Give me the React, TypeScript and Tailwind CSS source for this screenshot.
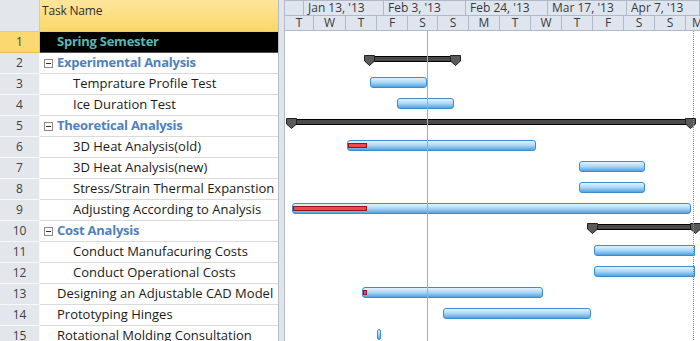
import React from "react";

type Row = { id: number; name: string; kind: "top" | "summary" | "task" | "plain" };

const rows: Row[] = [
  { id: 1, name: "Spring Semester", kind: "top" },
  { id: 2, name: "Experimental Analysis", kind: "summary" },
  { id: 3, name: "Temprature Profile Test", kind: "task" },
  { id: 4, name: "Ice Duration Test", kind: "task" },
  { id: 5, name: "Theoretical Analysis", kind: "summary" },
  { id: 6, name: "3D Heat Analysis(old)", kind: "task" },
  { id: 7, name: "3D Heat Analysis(new)", kind: "task" },
  { id: 8, name: "Stress/Strain Thermal Expanstion", kind: "task" },
  { id: 9, name: "Adjusting According to Analysis", kind: "task" },
  { id: 10, name: "Cost Analysis", kind: "summary" },
  { id: 11, name: "Conduct Manufacuring Costs", kind: "task" },
  { id: 12, name: "Conduct Operational Costs", kind: "task" },
  { id: 13, name: "Designing an Adjustable CAD Model", kind: "plain" },
  { id: 14, name: "Prototyping Hinges", kind: "plain" },
  { id: 15, name: "Rotational Molding Consultation", kind: "plain" },
];

// chart x positions are page x minus 285
type Bar = { type: "task" | "summary"; from: number; to: number; progress?: number; open?: boolean };
const bars: (Bar | null)[] = [
  null,
  { type: "summary", from: 365, to: 460 },
  { type: "task", from: 370, to: 427 },
  { type: "task", from: 397, to: 454 },
  { type: "summary", from: 287, to: 695 },
  { type: "task", from: 347, to: 536, progress: 366 },
  { type: "task", from: 579, to: 645 },
  { type: "task", from: 579, to: 645 },
  { type: "task", from: 292, to: 691, progress: 366 },
  { type: "summary", from: 588, to: 700 },
  { type: "task", from: 594, to: 695, open: true },
  { type: "task", from: 594, to: 695, open: true },
  { type: "task", from: 362, to: 543, progress: 366 },
  { type: "task", from: 443, to: 591 },
  { type: "task", from: 377, to: 381 },
];

const topTier = [
  { w: 19, label: "" },
  { w: 80, label: "Jan 13, '13" },
  { w: 82, label: "Feb 3, '13" },
  { w: 82, label: "Feb 24, '13" },
  { w: 79, label: "Mar 17, '13" },
  { w: 73, label: "Apr 7, '13" },
];

const bottomTier = [
  { w: 29, l: "T" },
  { w: 32, l: "W" },
  { w: 31, l: "T" },
  { w: 31, l: "F" },
  { w: 30, l: "S" },
  { w: 31, l: "S" },
  { w: 31, l: "M" },
  { w: 31, l: "T" },
  { w: 31, l: "W" },
  { w: 31, l: "T" },
  { w: 31, l: "F" },
  { w: 31, l: "S" },
  { w: 31, l: "S" },
  { w: 24, l: "M" },
];

function Cap({ x }: { x: number }) {
  return (
    <svg className="absolute top-[3px]" style={{ left: x }} width="11" height="11" viewBox="0 0 11 11">
      <path d="M0.5 0.5 H10.5 V6 L5.5 10.5 L0.5 6 Z" fill="#5a5a5a" stroke="#222" strokeWidth="1" />
    </svg>
  );
}

function ChartBar({ bar }: { bar: Bar }) {
  const left = bar.from - 285;
  const width = bar.to - bar.from;
  if (bar.type === "summary") {
    return (
      <>
        <div
          className="absolute top-[4px] h-[6px] bg-[#4a4a4a] border border-black"
          style={{ left, width }}
        />
        <Cap x={left - 1} />
        <Cap x={left + width - 10} />
      </>
    );
  }
  return (
    <div
      className={`absolute top-[4px] h-[11px] border border-[#3b8bd0] bg-gradient-to-b from-[#e4f3fd] via-[#a9d6f6] to-[#4fa3e2] ${
        bar.open ? "rounded-l-[3px]" : "rounded-[3px]"
      }`}
      style={{ left, width }}
    >
      {bar.progress && (
        <div
          className="absolute left-0 top-[2px] h-[5px] bg-[#f04850] border border-[#a01018]"
          style={{ width: bar.progress - bar.from }}
        />
      )}
    </div>
  );
}

export default function App() {
  return (
    <div
      className="flex w-[700px] h-[341px] overflow-hidden bg-white text-[12px] text-[#1a1a1a]"
      style={{ fontFamily: "'Open Sans', 'Noto Sans', sans-serif" }}
    >
      {/* Sheet */}
      <div className="w-[278px] shrink-0 flex flex-col">
        <div className="flex h-[32px] shrink-0 border-b border-[#c8ccd2]">
          <div className="w-[40px] bg-[#e3e7ec] border-r border-[#c8ccd2]" />
          <div className="flex-1 bg-gradient-to-b from-[#fee59a] to-[#fcd866] pl-[2px] pt-[2px] text-[#303030] tracking-[-0.2px]">
            Task Name
          </div>
        </div>
        {rows.map((r) => (
          <div key={r.id} className="flex h-[21px] shrink-0">
            <div
              className={`w-[40px] flex items-center justify-center border-r border-b text-[#404040] ${
                r.id === 1 ? "bg-[#fcd970] border-[#e8c050]" : "bg-[#e3e7ec] border-[#f6f8fa]"
              }`}
            >
              {r.id}
            </div>
            <div
              className={`flex-1 flex items-center whitespace-nowrap overflow-hidden text-[13px] border-b ${
                r.kind === "top" ? "bg-black border-[#505050]" : "border-[#dadada]"
              }`}
            >
              {r.kind === "top" && (
                <span className="pl-[17px] font-bold tracking-[-0.25px] text-[#5cb8b2]">{r.name}</span>
              )}
              {r.kind === "summary" && (
                <>
                  <span className="ml-[4px] mr-[4px] w-[9px] h-[9px] border border-[#8a8a8a] bg-white flex items-center justify-center">
                    <span className="w-[5px] h-[1px] bg-[#303030]" />
                  </span>
                  <span className="font-bold tracking-[-0.25px] text-[#4f81bd]">{r.name}</span>
                </>
              )}
              {r.kind === "task" && <span className="pl-[33px]">{r.name}</span>}
              {r.kind === "plain" && <span className="pl-[17px]">{r.name}</span>}
            </div>
          </div>
        ))}
      </div>

      {/* Split bar */}
      <div className="w-[7px] shrink-0 bg-[#e1e5eb] border-l border-r border-[#b4bcc8]" />

      {/* Gantt */}
      <div className="flex-1 flex flex-col relative text-[#3a3a3a]">
        <div className="flex h-[16px] shrink-0 bg-[#dfe5ee] border-b border-t border-[#b0b9c6] overflow-hidden">
          {topTier.map((c, i) => (
            <div
              key={i}
              className="shrink-0 border-r border-[#b0b9c6] pl-[4px] leading-[14px] whitespace-nowrap overflow-hidden"
              style={{ width: c.w }}
            >
              {c.label}
            </div>
          ))}
        </div>
        <div className="flex h-[15px] shrink-0 bg-[#dfe5ee] border-b border-[#b0b9c6] overflow-hidden">
          {bottomTier.map((c, i) => (
            <div
              key={i}
              className="shrink-0 border-r border-[#b0b9c6] text-center leading-[14px] overflow-hidden"
              style={{ width: c.w }}
            >
              {c.l}
            </div>
          ))}
        </div>
        <div className="relative flex-1">
          {bars.map((b, i) => (
            <div key={i} className="relative h-[21px]">
              {b && <ChartBar bar={b} />}
            </div>
          ))}
          <div className="absolute top-0 bottom-0 left-[142px] w-0 border-l border-[#f39c3c]" />
          <div className="absolute top-0 bottom-0 left-[408px] w-0 border-l border-dotted border-[#909090]" />
        </div>
      </div>
    </div>
  );
}
